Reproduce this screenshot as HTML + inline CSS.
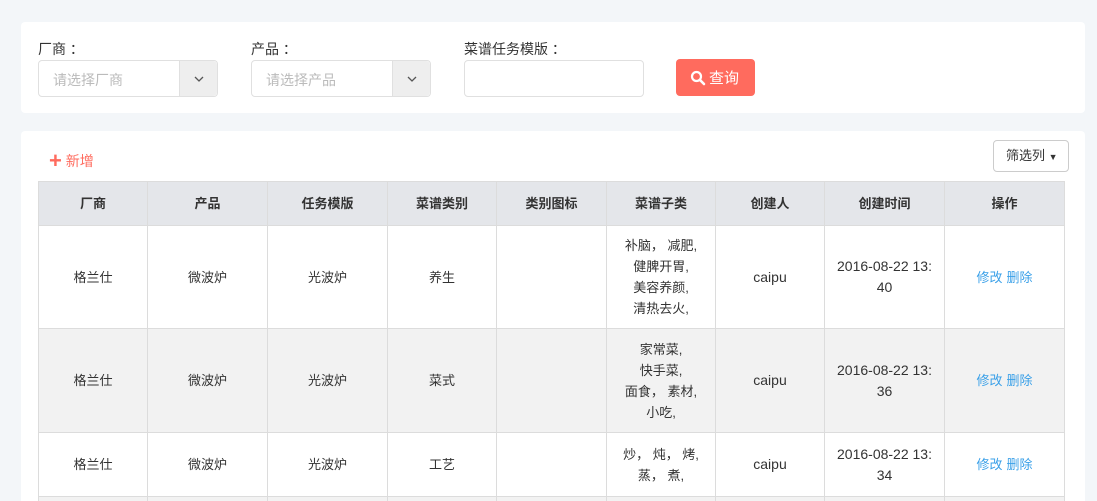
<!DOCTYPE html>
<html><head><meta charset="utf-8"><style>
*{box-sizing:border-box;margin:0;padding:0}
html,body{width:1097px;height:501px;overflow:hidden}
body{background:#f3f6f9;font-family:"Liberation Sans","Noto Sans CJK SC",sans-serif;font-size:13px;color:#333;position:relative}
.card{position:absolute;left:21px;width:1064px;background:#fff;border-radius:4px}
.lbl{position:absolute;top:17px;font-size:14px;color:#333}
.sel{position:absolute;top:38px;height:37px;border:1px solid #e0e0e0;border-radius:4px;background:#fff}
.sel .ph{position:absolute;left:14px;top:9px;color:#bbb;font-size:14px}
.sel .ar{position:absolute;right:0;top:0;width:38px;height:35px;background:#eeeeee;border-left:1px solid #e0e0e0;border-radius:0 4px 4px 0}
.btn{position:absolute;left:655px;top:37px;width:79px;height:37px;background:#ff6b5e;border-radius:4px;color:#fff;font-size:15px}
table{position:absolute;left:17px;top:50px;border-collapse:collapse;table-layout:fixed;width:1026px}
td,th{border:1px solid #dcdcdc;text-align:center;vertical-align:middle;font-size:13px;line-height:21px}
th{background:#e4e6ea;height:44px;font-weight:bold}
a{color:#3aa0e8;text-decoration:none;margin:0 2px}
.g td{background:#f2f2f2}
</style></head><body>
<div class="card" style="top:22px;height:91px">
 <div class="lbl" style="left:17px">厂商 ：</div>
 <div class="sel" style="left:17px;width:180px"><span class="ph">请选择厂商</span><div class="ar"><svg width="38" height="35"><path d="M15 16l4 4 4-4" fill="none" stroke="#555" stroke-width="1.3"/></svg></div></div>
 <div class="lbl" style="left:230px">产品 ：</div>
 <div class="sel" style="left:230px;width:180px"><span class="ph">请选择产品</span><div class="ar"><svg width="38" height="35"><path d="M15 16l4 4 4-4" fill="none" stroke="#555" stroke-width="1.3"/></svg></div></div>
 <div class="lbl" style="left:443px">菜谱任务模版 ：</div>
 <div class="sel" style="left:443px;width:180px"></div>
 <div class="btn"><svg style="position:absolute;left:14px;top:11px" width="16" height="16"><circle cx="6.5" cy="6.5" r="4.5" fill="none" stroke="#fff" stroke-width="2.2"/><path d="M10 10l4 4" stroke="#fff" stroke-width="2.6" stroke-linecap="round"/></svg><span style="position:absolute;left:33px;top:8px">查询</span></div>
</div>
<div class="card" style="top:131px;height:370px;border-radius:4px 4px 0 0">
 <div style="position:absolute;left:28px;top:15px;color:#ff6b5e;font-size:14px"><span style="font-size:22px;font-weight:bold;position:relative;top:2px">+</span> 新增</div>
 <div style="position:absolute;left:972px;top:9px;width:76px;height:32px;border:1px solid #ccc;border-radius:4px;font-size:13px;line-height:30px;padding-left:12px">筛选列 <span style="font-size:9px">▼</span></div>
 <table>
 <colgroup><col style="width:109px"><col style="width:120px"><col style="width:120px"><col style="width:109px"><col style="width:110px"><col style="width:109px"><col style="width:109px"><col style="width:120px"><col style="width:120px"></colgroup>
 <tr><th>厂商</th><th>产品</th><th>任务模版</th><th>菜谱类别</th><th>类别图标</th><th>菜谱子类</th><th>创建人</th><th>创建时间</th><th>操作</th></tr>
 <tr style="height:103px"><td>格兰仕</td><td>微波炉</td><td>光波炉</td><td>养生</td><td></td><td>补脑，&nbsp;减肥,<br>健脾开胃,<br>美容养颜,<br>清热去火,</td><td style="font-size:14px">caipu</td><td style="font-size:14px">2016-08-22 13:<br>40</td><td><a>修改</a><a>删除</a></td></tr>
 <tr class="g" style="height:104px"><td>格兰仕</td><td>微波炉</td><td>光波炉</td><td>菜式</td><td></td><td>家常菜,<br>快手菜,<br>面食，&nbsp;素材,<br>小吃,</td><td style="font-size:14px">caipu</td><td style="font-size:14px">2016-08-22 13:<br>36</td><td><a>修改</a><a>删除</a></td></tr>
 <tr style="height:64px"><td>格兰仕</td><td>微波炉</td><td>光波炉</td><td>工艺</td><td></td><td>炒，&nbsp;炖，&nbsp;烤,<br>蒸，&nbsp;煮,</td><td style="font-size:14px">caipu</td><td style="font-size:14px">2016-08-22 13:<br>34</td><td><a>修改</a><a>删除</a></td></tr>
 <tr class="g" style="height:5px"><td style="line-height:0"></td><td style="line-height:0"></td><td style="line-height:0"></td><td style="line-height:0"></td><td style="line-height:0"></td><td style="line-height:0"></td><td style="line-height:0"></td><td style="line-height:0"></td><td style="line-height:0"></td></tr>
 </table>
</div>
</body></html>
